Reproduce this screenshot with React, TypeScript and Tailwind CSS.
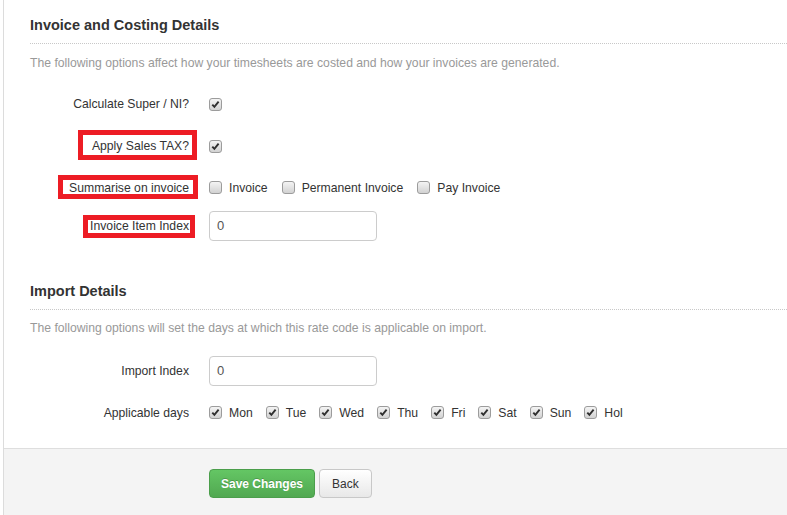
import React from "react";

function Cb({ checked }: { checked?: boolean }) {
  return (
    <span className="inline-flex w-[13px] h-[13px] shrink-0 items-center justify-center rounded-[3px] border border-[#9c9c9c] bg-linear-to-b from-[#f4f4f4] to-[#d2d2d2]">
      {checked && (
        <svg width="9" height="9" viewBox="0 0 9 9">
          <path d="M1.3 4.6 L3.4 6.9 L7.6 1.7" stroke="#2f2f2f" strokeWidth="1.9" fill="none" />
        </svg>
      )}
    </span>
  );
}

function Opt({ label, checked }: { label: string; checked?: boolean }) {
  return (
    <span className="flex items-center gap-[7px]">
      <Cb checked={checked} />
      <span>{label}</span>
    </span>
  );
}

function Row({
  label,
  children,
  mark,
  className = "",
}: {
  label: string;
  children: React.ReactNode;
  mark?: string;
  className?: string;
}) {
  return (
    <div className={`flex h-[30px] items-center ${className}`}>
      <div className="w-[185px] flex justify-end">
        <span className="relative leading-[16px]">
          {label}
          {mark && <span className={`absolute border-[5px] border-[#ed1c24] ${mark}`} />}
        </span>
      </div>
      <div className="ml-[20px] flex items-center">{children}</div>
    </div>
  );
}

function Input() {
  return (
    <div className="w-[168px] h-[30px] rounded-[4px] border border-[#cccccc] bg-white flex items-center pl-[7px] text-[13px] text-[#555]">
      0
    </div>
  );
}

export default function App() {
  return (
    <div className="w-[787px] h-[515px] overflow-hidden bg-white font-['Liberation_Sans',Arial,sans-serif] text-[12.2px] text-[#333]">
      <div className="ml-[3px] h-full border-l border-[#dcdcdc] flex flex-col">
        <div className="ml-[26px] mt-[15px] pb-[8px] border-b border-dotted border-[#c8c8c8] text-[14.5px] leading-[20px] font-bold text-[#333]">
          Invoice and Costing Details
        </div>
        <div className="ml-[26px] mt-[11px] leading-[16px] text-[#999]">
          The following options affect how your timesheets are costed and how your invoices are generated.
        </div>

        <Row label="Calculate Super / NI?" className="mt-[18px]">
          <Cb checked />
        </Row>
        <Row label="Apply Sales TAX?" className="mt-[12px]" mark="-left-[14px] -right-[8px] -top-[8px] -bottom-[6px]">
          <Cb checked />
        </Row>
        <Row label="Summarise on invoice" className="mt-[12px]" mark="-left-[11px] -right-[9px] -top-[5px] -bottom-[3px]">
          <div className="flex items-center gap-[14px]">
            <Opt label="Invoice" />
            <Opt label="Permanent Invoice" />
            <Opt label="Pay Invoice" />
          </div>
        </Row>
        <Row label="Invoice Item Index" className="mt-[8px]" mark="-left-[7px] -right-[6px] -top-[3px] -bottom-[4px]">
          <Input />
        </Row>

        <div className="ml-[26px] mt-[40px] pb-[8px] border-b border-dotted border-[#c8c8c8] text-[14.5px] leading-[20px] font-bold text-[#333]">
          Import Details
        </div>
        <div className="ml-[26px] mt-[10px] leading-[16px] text-[#999]">
          The following options will set the days at which this rate code is applicable on import.
        </div>

        <Row label="Import Index" className="mt-[20px]">
          <Input />
        </Row>
        <Row label="Applicable days" className="mt-[12px]">
          <div className="flex items-center gap-[13px]">
            {["Mon", "Tue", "Wed", "Thu", "Fri", "Sat", "Sun", "Hol"].map((d) => (
              <Opt key={d} label={d} checked />
            ))}
          </div>
        </Row>

        <div className="mt-[20px] flex-1 border-t border-[#dedede] bg-[#f4f4f4] pt-[20px] pl-[205px]">
          <div className="flex gap-[4px]">
            <button className="h-[29px] px-[11px] rounded-[4px] border border-[#4b9e4b] bg-linear-to-b from-[#64c664] to-[#51a851] text-white font-bold text-[12px] [text-shadow:0_-1px_0_rgba(0,0,0,0.2)]">
              Save Changes
            </button>
            <button className="h-[29px] px-[12px] rounded-[4px] border border-[#c8c8c8] bg-linear-to-b from-white to-[#e8e8e8] text-[#333] text-[12px]">
              Back
            </button>
          </div>
        </div>
      </div>
    </div>
  );
}
